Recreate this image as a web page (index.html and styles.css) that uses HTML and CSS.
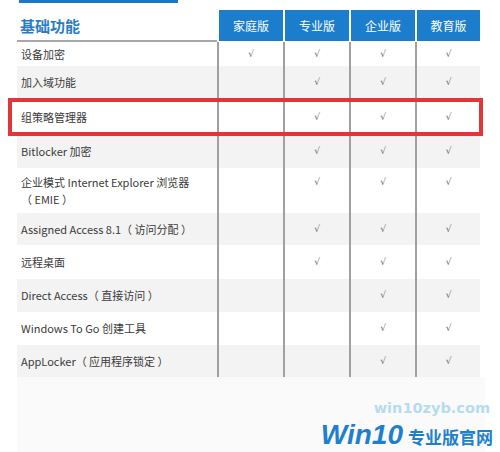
FILE: index.html
```html
<!DOCTYPE html>
<html lang="zh">
<head>
<meta charset="utf-8">
<link rel="stylesheet" href="styles.css">
</head>
<body>
<div class="page">
  <div class="topbar"></div>
  <div class="table">
    <div class="row head">
      <div class="name title">基础功能</div>
      <div class="ed">家庭版</div>
      <div class="ed">专业版</div>
      <div class="ed">企业版</div>
      <div class="ed">教育版</div>
    </div>
    <div class="row h24">
      <div class="name">设备加密</div>
      <div class="c">√</div><div class="c">√</div><div class="c">√</div><div class="c">√</div>
    </div>
    <div class="row alt h33">
      <div class="name">加入域功能</div>
      <div class="c"></div><div class="c">√</div><div class="c">√</div><div class="c">√</div>
    </div>
    <div class="row h36">
      <div class="name">组策略管理器</div>
      <div class="c"></div><div class="c">√</div><div class="c">√</div><div class="c">√</div>
    </div>
    <div class="row alt h33">
      <div class="name">Bitlocker 加密</div>
      <div class="c"></div><div class="c">√</div><div class="c">√</div><div class="c">√</div>
    </div>
    <div class="row h45">
      <div class="name">企业模式 Internet Explorer 浏览器<br>（ EMIE ）</div>
      <div class="c top"></div><div class="c top">√</div><div class="c top">√</div><div class="c top">√</div>
    </div>
    <div class="row alt h32">
      <div class="name">Assigned Access 8.1（ 访问分配 ）</div>
      <div class="c"></div><div class="c">√</div><div class="c">√</div><div class="c">√</div>
    </div>
    <div class="row h34">
      <div class="name">远程桌面</div>
      <div class="c"></div><div class="c">√</div><div class="c">√</div><div class="c">√</div>
    </div>
    <div class="row alt h33">
      <div class="name">Direct Access（ 直接访问 ）</div>
      <div class="c"></div><div class="c"></div><div class="c">√</div><div class="c">√</div>
    </div>
    <div class="row h33">
      <div class="name">Windows To Go 创建工具</div>
      <div class="c"></div><div class="c"></div><div class="c">√</div><div class="c">√</div>
    </div>
    <div class="row alt h32">
      <div class="name">AppLocker（ 应用程序锁定 ）</div>
      <div class="c"></div><div class="c"></div><div class="c">√</div><div class="c">√</div>
    </div>
  </div>
  <div class="foot"></div>
  <div class="highlight"></div>
  <div class="watermark">
    <div class="wm-url">win10zyb.com</div>
    <div class="wm-brand"><span class="wm-win">Win10</span><span class="wm-cn">专业版官网</span></div>
  </div>
</div>
</body>
</html>
```

FILE: styles.css
```css
html, body {
  margin: 0;
  padding: 0;
  background: #ffffff;
}
body {
  font-family: "Noto Sans CJK SC", "Noto Sans", sans-serif;
  color: #333333;
  width: 500px;
  height: 452px;
  overflow: hidden;
}
.page {
  position: relative;
  width: 500px;
  height: 452px;
}
.topbar {
  margin-left: 19px;
  width: 159px;
  height: 3px;
  background: #1b78c6;
}
.table {
  margin-top: 7px;
  margin-left: 17px;
  width: 463px;
}
.row {
  display: grid;
  grid-template-columns: 200px 66px 66px 66px 65px;
}
.row.alt {
  background: #f3f3f3;
}
.row.head {
  height: 32px;
}
.h24 { height: 24px; }
.h32 { height: 32px; }
.h33 { height: 33px; }
.h34 { height: 34px; }
.h36 { height: 36px; }
.h45 { height: 45px; }
.name {
  display: flex;
  align-items: center;
  padding-left: 4px;
  font-size: 11px;
  line-height: 17px;
  color: #3a3a3a;
}
.title {
  font-size: 15px;
  font-weight: bold;
  color: #2a7dc4;
  padding-left: 3px;
  border-bottom: 2px solid #a8a8a8;
  height: 30px;
}
.ed {
  display: flex;
  align-items: center;
  justify-content: center;
  background: #1b7dcc;
  color: #ffffff;
  font-size: 12px;
  border-left: 2px solid #ffffff;
  height: 31px;
}
.c {
  display: flex;
  align-items: center;
  justify-content: center;
  border-left: 2px solid #a0a0a0;
  font-family: "DejaVu Sans", sans-serif;
  font-size: 9px;
  color: #6a6a6a;
  line-height: 17px;
}
.c.top {
  align-items: flex-start;
  padding-top: 6px;
}
.foot {
  margin-left: 17px;
  width: 468px;
  height: 75px;
  background: #fafafa;
}
.highlight {
  position: absolute;
  left: 8px;
  top: 98px;
  width: 467px;
  height: 30px;
  border: 4px solid #e2353a;
}
.watermark {
  position: absolute;
  right: 7px;
  bottom: 2px;
  display: flex;
  flex-direction: column;
  align-items: flex-end;
}
.wm-url {
  font-family: "DejaVu Sans", sans-serif;
  font-weight: bold;
  font-size: 14.5px;
  color: #b5dcef;
  line-height: 18px;
  margin-right: 3px;
  margin-bottom: 5px;
}
.wm-brand {
  display: flex;
  align-items: baseline;
  line-height: 26px;
}
.wm-win {
  font-family: "Liberation Sans", sans-serif;
  font-style: italic;
  font-weight: bold;
  font-size: 28px;
  color: #1f7fcf;
  margin-right: 5px;
}
.wm-cn {
  font-weight: bold;
  font-size: 17px;
  color: #1f7fcf;
}
```
